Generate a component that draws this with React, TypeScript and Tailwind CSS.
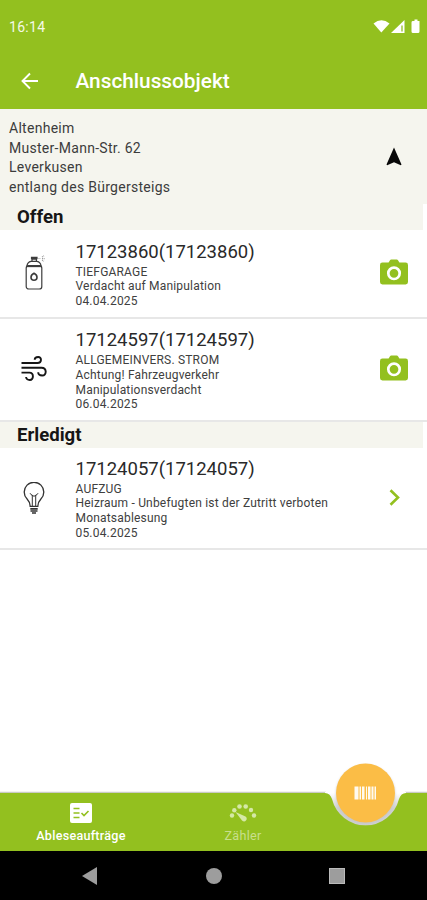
import type { ReactNode } from "react";

const Spray = () => (
  <svg width="24" height="38" viewBox="0 0 24 38" fill="none" stroke="#3c3c3c" strokeWidth="1.200">
    <rect x="2.2" y="11.5" width="15.6" height="23.5" rx="2.6" />
    <path d="M3 11.8C3.4 8.600 5 7.800 7 7.400h6c2 .4 3.600 1.200 4 4.400" />
    <path d="M2.500 12.200h15" strokeWidth="1.900" />
    <path d="M8 7V5.200h4.400V7M7.500 3.300h5.500v1.400H7.500z" strokeWidth="1.200" />
    <path d="M14.500 4.500h2M18 3l2-1.200M18 4.700h2.600M18 6.200l2 1" stroke="#999" strokeDasharray="1 .7" />
    <path d="M10 19.300c2 1 3 2.300 3 4a3 3 0 0 1-6 0c0-1.700 1-3 3-4z" strokeWidth="1.600" />
  </svg>
);

const Wind = () => (
  <svg width="28" height="28" viewBox="0 0 28 28" fill="none" stroke="#161616" strokeWidth="1.900">
    <path d="M1.500 8h16c4.500 0 4.500-6 .7-6-2.300 0-3.500 1.200-3.500 2.800" />
    <path d="M1.500 12.800h20c5.500 0 5.500 7.700.7 7.700-2.500 0-4-1.400-4-3.200" />
    <path d="M1.500 17.600h8c4.500 0 4.500 7.400.3 7.400-2.400 0-3.700-1.300-3.700-3" />
  </svg>
);

const Bulb = () => (
  <svg width="24" height="34" viewBox="0 0 24 34" fill="none" stroke="#333" strokeWidth="1.3">
    <path d="M8.2 24.3c0-3.8-1.2-5.3-3.1-7.3a9.8 9.8 0 1 1 13.8 0c-1.9 2-3.1 3.5-3.1 7.3z" />
    <path d="M10.3 24V13.8L8 11.2M13.7 24V13.8l2.4-2.6M9.5 12.8l2.5 1.5 2.5-1.5" strokeWidth="1" />
    <path d="M8.3 26.8h7.4M8.5 29h7" strokeWidth="1.7" />
    <path d="M10 31h4" strokeWidth="1.5" />
  </svg>
);

const Camera = () => (
  <svg className="mb-[4px]" width="28" height="26" viewBox="0 0 28 26">
    <path fill="#93c01f" d="M2.4 3.5h6.2L10 1.2Q10.4.5 11.2.5h5.6q.8 0 1.2.7l1.4 2.3h6.2Q28 3.5 28 5.9v17.2q0 2.4-2.4 2.4H2.4Q0 25.500 0 23.100V5.900Q0 3.500 2.400 3.500z" />
    <circle cx="14" cy="14.300" r="5.700" fill="none" stroke="#fff" strokeWidth="2.700" />
  </svg>
);

const Chevron = () => (
  <svg width="28" height="20" viewBox="0 0 28 20" fill="none" stroke="#93c01f" strokeWidth="2.600">
    <path d="m10.500 2.200 7.500 7.300-7.500 7.300" />
  </svg>
);

type Order = { number: string; lines: string[]; icon: ReactNode; action: ReactNode; height: string };

const OrderRow = ({ number, lines, icon, action, height }: Order) => (
  <div className={`flex shrink-0 items-center border-b-2 border-[#e7e7e7] ${height}`}>
    <div className="flex w-[75.500px] shrink-0 justify-center pb-[2px] pr-[8px]">{icon}</div>
    <div className="min-w-0 flex-1 whitespace-nowrap pt-[1px]">
      <div className="mb-[1px] text-[18.500px] leading-[24px] text-[#292929]">{number}</div>
      {lines.map((line) => (
        <div key={line} className="text-[12px] leading-[14.600px] tracking-[0.190px] text-[#404040]">{line}</div>
      ))}
    </div>
    <div className="mr-[19px] shrink-0">{action}</div>
  </div>
);

const Section = ({ children }: { children: ReactNode }) => (
  <h2 className="mr-[4px] h-[26px] shrink-0 bg-[#f5f5ee] pl-[17px] text-[18.600px] font-bold leading-[27px] text-[#161616]">{children}</h2>
);

export default function App() {
  return (
    <div className="flex h-[900px] w-[427px] flex-col overflow-hidden bg-white font-['Roboto',sans-serif]">
      <header className="h-[109px] shrink-0 bg-[#93c01f] text-white">
        <div className="flex h-[53px] items-center justify-between pl-[9px] pr-[7px]">
          <span className="pt-[1px] text-[14px] tracking-[0.300px] text-[#f5fae8]">16:14</span>
          <svg width="48" height="16" viewBox="0 0 48 16" fill="#fff">
            <path d="M1.500 4.500Q9.500-2 17.500 4.500L9.300 13.500z" />
            <path d="M19 14 32.500 1v13z" />
            <path d="M29 6.500h2v6h-2z" fill="#93c01f" opacity=".65" />
            <path d="M40.500 2h2V.500h3V2h2v10.500q0 1.500-1.500 1.500h-5q-1.500 0-1.500-1.500v-9q0-1.500 1-1.500z" />
          </svg>
        </div>
        <div className="flex h-[56px] items-center">
          <div className="w-[75.500px] pl-[21px]">
            <svg width="18" height="18" viewBox="0 0 18 18" fill="none" stroke="#fff" strokeWidth="1.900">
              <path d="M17 9H2M9 1.500 1.500 9 9 16.500" />
            </svg>
          </div>
          <h1 className="pb-[1px] text-[20.800px] font-medium leading-[28px]">Anschlussobjekt</h1>
        </div>
      </header>

      <section className="flex h-[95px] shrink-0 items-center justify-between bg-[#f5f5ee] pl-[9px] pr-[25px]">
        <address className="pt-[3px] text-[14px] not-italic leading-[19.500px] tracking-[0.280px] text-[#3c3c3c]">
          Altenheim<br />Muster-Mann-Str. 62<br />Leverkusen<br />entlang des Bürgersteigs
        </address>
        <svg width="16" height="19" viewBox="0 0 16 19" fill="#080808">
          <path d="m8 .500 7.500 17-.7.700L8 15.200 1.200 18.200l-.7-.7z" />
        </svg>
      </section>

      <Section>Offen</Section>
      <OrderRow number="17123860(17123860)" lines={["TIEFGARAGE", "Verdacht auf Manipulation", "04.04.2025"]} icon={<div className="pl-[4px]"><Spray /></div>} action={<Camera />} height="h-[89px]" />
      <OrderRow number="17124597(17124597)" lines={["ALLGEMEINVERS. STROM", "Achtung! Fahrzeugverkehr", "Manipulationsverdacht", "06.04.2025"]} icon={<Wind />} action={<Camera />} height="h-[103px]" />
      <Section>Erledigt</Section>
      <OrderRow number="17124057(17124057)" lines={["AUFZUG", "Heizraum - Unbefugten ist der Zutritt verboten", "Monatsablesung", "05.04.2025"]} icon={<div className="pt-[3px]"><Bulb /></div>} action={<Chevron />} height="h-[102px]" />
      <main className="flex-1" />

      <nav className="relative flex h-[59px] shrink-0 text-[12.600px] leading-[15px] text-white">
        <svg className="absolute -top-[30px] left-0" width="427" height="89" viewBox="0 0 427 89">
          <defs>
            <filter id="soft" x="-30%" y="-30%" width="160%" height="160%"><feGaussianBlur stdDeviation="1" /></filter>
            <linearGradient id="gap" x1="0" y1="31" x2="0" y2="46" gradientUnits="userSpaceOnUse">
              <stop stopColor="#fff" />
              <stop offset="1" stopColor="#cfd0d1" />
            </linearGradient>
          </defs>
          <path d="M0 30.500h326M405 30.500h22" fill="none" stroke="#c9cbc4" strokeWidth="1.500" />
          <path d="M0 31h427v58H0z" fill="#93c01f" />
          <path d="M325 30v1q5 0 7 6a34.500 34.500 0 0 0 67 0q2-6 7-6v-1z" fill="url(#gap)" />
          <circle cx="365.500" cy="32.500" r="29.800" fill="#c4c5c6" opacity=".7" filter="url(#soft)" />
          <circle cx="365.500" cy="31" r="29.500" fill="#fbbd46" />
          <path d="M354.500 24.500h4v13h-4zM359.500 24.500h1.500v13h-1.500zM362 24.500h2.500v13H362zM366 24.500h1v13h-1zM368 24.500h2.500v13H368zM371.500 24.500h2v13h-2zM374.500 24.500h1.500v13h-1.500z" fill="#fffaf0" />
        </svg>
        <div className="relative flex w-[162px] flex-col items-center gap-[5px] pt-[11px]">
          <svg width="22" height="20" viewBox="0 0 22 20">
            <rect width="22" height="20" rx="2" fill="#fff" />
            <path d="M3.500 5.500h6M3.500 10h6M3.500 14.500h6M11.500 10l2.500 2.500L18.500 8" fill="none" stroke="#93c01f" strokeWidth="1.600" />
          </svg>
          <span className="font-medium tracking-[0.250px]">Ableseaufträge</span>
        </div>
        <div className="relative flex w-[162px] flex-col items-center gap-[5px] pt-[11px] text-[#c8df8c]">
          <svg width="28" height="20" viewBox="0 0 28 20" fill="#d5e8a7">
            <circle cx="3" cy="12.500" r="2.200" /><circle cx="5.300" cy="7.200" r="2.200" /><circle cx="10.500" cy="3.500" r="2.300" />
            <circle cx="16.700" cy="3.500" r="2.300" /><circle cx="22" cy="7" r="2.200" /><circle cx="25" cy="12.500" r="2.200" />
            <path d="m6.500 9 10 4.500c3.200 2.500-.5 6.800-3.500 4z" />
          </svg>
          <span className="tracking-[0.250px]">Zähler</span>
        </div>
      </nav>

      <footer className="flex h-[49px] shrink-0 items-center bg-black">
        <svg className="ml-[82px]" width="15" height="18" viewBox="0 0 15 18" fill="#9d9d9d"><path d="M15 0v18L0 9z" /></svg>
        <div className="ml-[109px] size-[16px] rounded-full bg-[#9d9d9d]" />
        <div className="ml-[107px] size-[16px] border border-[#bbb] bg-[#9d9d9d]" />
      </footer>
    </div>
  );
}
